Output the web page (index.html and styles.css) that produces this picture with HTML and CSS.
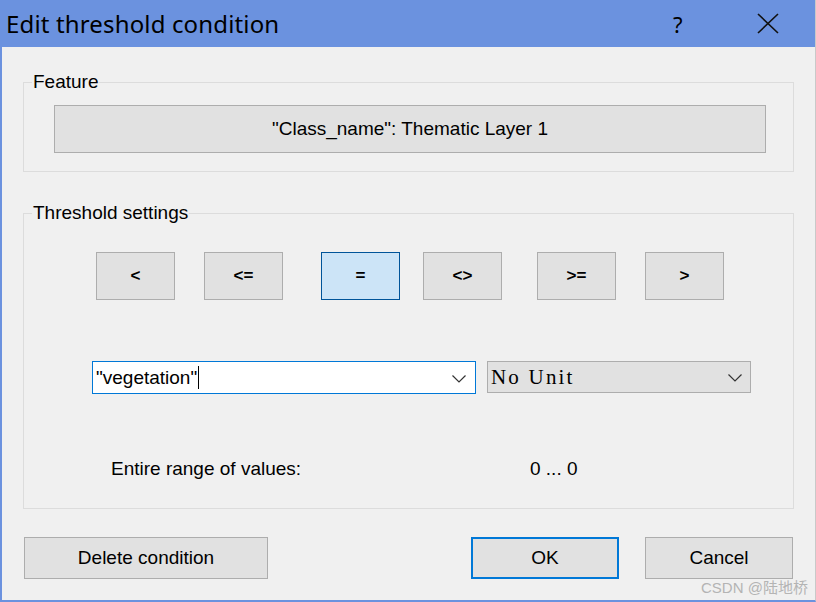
FILE: index.html
```html
<!DOCTYPE html>
<html lang="en">
<head>
  <meta charset="UTF-8">
  <title>Edit threshold condition</title>
  <link rel="stylesheet" href="styles.css">
</head>
<body>

<div class="window">
  <div class="titlebar">
    <span class="title">Edit threshold condition</span>
    <span class="help">?</span>
    <span class="close">
      <svg width="22" height="21" viewBox="0 0 22 21">
        <path d="M1 1 L21 20 M21 1 L1 20" stroke="#111" stroke-width="1.6" fill="none"/>
      </svg>
    </span>
  </div>

  <div class="content">
    <fieldset class="group feature">
      <legend>Feature</legend>
      <button class="btn feature-btn">"Class_name": Thematic Layer 1</button>
    </fieldset>

    <fieldset class="group threshold">
      <legend>Threshold settings</legend>

      <div class="ops">
        <button class="btn op">&lt;</button>
        <button class="btn op op-2">&lt;=</button>
        <button class="btn op op-3 selected">=</button>
        <button class="btn op op-4">&lt;&gt;</button>
        <button class="btn op op-5">&gt;=</button>
        <button class="btn op op-6">&gt;</button>
      </div>

      <div class="inputs">
        <div class="combo value">
          <span class="combo-text">"vegetation"<span class="caret"></span></span>
          <svg class="chevron" width="14" height="8" viewBox="0 0 14 8">
            <path d="M0.5 0.5 L7 7 L13.5 0.5" stroke="#333" stroke-width="1.2" fill="none"/>
          </svg>
        </div>
        <div class="combo unit">
          <span class="combo-text">No Unit</span>
          <svg class="chevron" width="14" height="8" viewBox="0 0 14 8">
            <path d="M0.5 0.5 L7 7 L13.5 0.5" stroke="#333" stroke-width="1.2" fill="none"/>
          </svg>
        </div>
      </div>

      <div class="range">
        <span class="range-label">Entire range of values:</span>
        <span class="range-value">0 ... 0</span>
      </div>
    </fieldset>

    <div class="actions">
      <button class="btn action delete">Delete condition</button>
      <button class="btn action ok">OK</button>
      <button class="btn action cancel">Cancel</button>
    </div>
  </div>

  <div class="watermark">CSDN @陆地桥</div>
</div>

</body>
</html>
```

FILE: styles.css
```css
body {
  margin: 0;
  font-family: "Liberation Sans", Arial, sans-serif;
  background-color: #f0f0f0;
}
.window {
  position: relative;
  width: 816px;
  height: 602px;
  box-sizing: border-box;
  border-left: 2px solid #6b92df;
  border-right: 1px solid #c9c9c9;
  border-bottom: 2px solid #6b92df;
  background-color: #f0f0f0;
  overflow: hidden;
}
.titlebar {
  height: 47px;
  margin-left: -2px;
  margin-right: -1px;
  background-color: #6b92df;
  display: flex;
  align-items: center;
  color: #000;
}
.title {
  font-family: "Noto Sans", "Open Sans", sans-serif;
  font-size: 24px;
  padding-left: 6px;
  padding-bottom: 1px;
  flex: 1;
  letter-spacing: 0.15px;
}
.help {
  font-family: "Noto Sans", sans-serif;
  font-size: 22px;
  width: 14px;
  margin-right: 70px;
}
.close {
  display: flex;
  margin-right: 37px;
}
.content {
  padding-left: 21px;
}
.group {
  width: 771px;
  box-sizing: border-box;
  margin: 0;
  border: 1px solid #dcdcdc;
}
.group legend {
  font-size: 19px;
  line-height: 20px;
  padding: 0 1px;
  margin-left: 8px;
}
.feature {
  margin-top: 25px;
  padding: 13px 27px 18px 30px;
}
.feature legend {
  margin-left: -22px;
}
.btn {
  font-family: "Liberation Sans", Arial, sans-serif;
  font-size: 19px;
  color: #000;
  background-color: #e1e1e1;
  border: 1px solid #adadad;
  border-radius: 0;
  padding: 0;
  margin: 0;
  box-sizing: border-box;
}
.feature-btn {
  display: block;
  width: 712px;
  height: 48px;
}
.threshold {
  margin-top: 31px;
  padding: 29px 0 27px 0;
}
.ops {
  display: flex;
  margin-left: 72px;
}
.op {
  width: 79px;
  height: 48px;
  font-weight: bold;
  font-size: 17px;
}
.op-2 { margin-left: 29px; }
.op-3 { margin-left: 38px; }
.op-4 { margin-left: 23px; }
.op-5 { margin-left: 35px; }
.op-6 { margin-left: 29px; }
.op.selected {
  background-color: #cce4f7;
  border-color: #005499;
}
.inputs {
  display: flex;
  margin-top: 61px;
  margin-left: 68px;
}
.combo {
  display: flex;
  align-items: center;
  box-sizing: border-box;
}
.combo.value {
  width: 384px;
  height: 33px;
  background-color: #fff;
  border: 1px solid #0078d7;
  padding: 0 8px 0 3px;
}
.combo.unit {
  width: 264px;
  height: 32px;
  margin-left: 11px;
  background-color: #e1e1e1;
  border: 1px solid #adadad;
  padding: 0 8px 0 3px;
}
.combo-text {
  flex: 1;
  font-size: 19px;
  display: flex;
  align-items: center;
}
.unit .combo-text {
  font-family: "Liberation Serif", "Times New Roman", serif;
  font-size: 21px;
  letter-spacing: 2.2px;
}
.caret {
  display: inline-block;
  width: 1px;
  height: 23px;
  margin-left: 1px;
  background-color: #000;
}
.chevron {
  margin-top: 2px;
}
.value .chevron {
  margin-right: 1px;
}
.range {
  display: flex;
  margin-top: 63px;
  margin-left: 87px;
  line-height: 24px;
  font-size: 19px;
}
.range-label {
  width: 419px;
}
.actions {
  display: flex;
  margin-top: 28px;
  margin-left: 1px;
}
.action {
  height: 42px;
}
.delete {
  width: 244px;
}
.ok {
  width: 148px;
  margin-left: 203px;
  border: 2px solid #0078d7;
}
.cancel {
  width: 148px;
  margin-left: 26px;
}
.watermark {
  position: absolute;
  left: 699px;
  top: 576px;
  font-family: "Liberation Sans", "Noto Sans CJK SC", sans-serif;
  font-size: 15px;
  color: #b4b4b4;
}
```
